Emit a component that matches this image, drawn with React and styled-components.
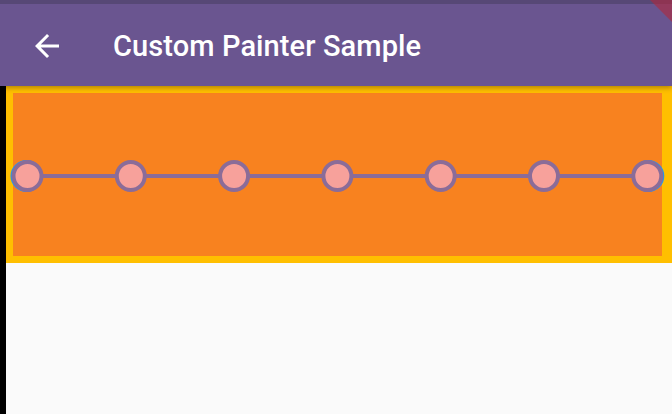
import React from 'react'
import styled, { createGlobalStyle } from 'styled-components'

const GlobalStyle = createGlobalStyle`
	html, body {
		margin: 0;
		padding: 0;
		background: #000;
		font-family: Roboto, "Noto Sans", sans-serif;
	}
`

const Screen = styled.div`
	width: 672px;
	height: 414px;
	display: flex;
	flex-direction: column;
	overflow: hidden;
	position: relative;
`

const AppBar = styled.header`
	position: relative;
	z-index: 2;
	height: 86px;
	background: #6a5590;
	display: flex;
	flex-direction: column;
	box-shadow: 0 2px 5px rgba(0, 0, 0, 0.3);
`

const StatusStrip = styled.div`
	height: 4px;
	background: #574876;
`

const Toolbar = styled.div`
	flex: 1;
	display: flex;
	align-items: center;
	padding: 2px 0 0 29px;
	gap: 48px;
`

const BackButton = styled.button`
	background: none;
	border: none;
	padding: 0;
	width: 36px;
	height: 36px;
	display: flex;
	align-items: center;
	justify-content: center;
	color: #fff;
	cursor: pointer;
`

const Title = styled.h1`
	margin: 0;
	color: #fff;
	font-size: 29px;
	font-weight: 500;
	letter-spacing: 0.1px;
`

const Body = styled.main`
	flex: 1;
	display: flex;
`

const Gutter = styled.div`
	width: 6px;
	background: #000;
`

const Content = styled.section`
	flex: 1;
	background: #fafafa;
`

const PainterBox = styled.div`
	height: 163px;
	background: #f8821f;
	border: solid #ffbf00;
	border-width: 7px 10px 7px 7px;
`

const Canvas = styled.svg`
	display: block;
	width: 100%;
	height: 100%;
	overflow: visible;
`

const Banner = styled.div`
	position: absolute;
	top: 0;
	right: 0;
	width: 0;
	height: 0;
	border-top: 22px solid rgba(176, 40, 60, 0.6);
	border-left: 22px solid transparent;
	z-index: 3;
`

const points = Array.from({ length: 7 }, (_, i) => 14.5 + i * 103.3)

const DotChain = () => (
	<Canvas>
		<circle cx={points[0] - 1} cy={83} r={16} fill="#2196f3" />
		<circle cx={points[6] + 1} cy={83} r={16} fill="#2196f3" />
		<line x1={points[0]} y1={83} x2={points[6]} y2={83} stroke="#8b6c98" strokeWidth={4} />
		{points.map((x) => (
			<circle key={x} cx={x} cy={83} r={14} fill="#f7a19b" stroke="#8b6c98" strokeWidth={4} />
		))}
	</Canvas>
)

const App = () => {
	return (
		<>
		<GlobalStyle/>
		<Screen>
			<AppBar>
				<StatusStrip/>
				<Toolbar>
					<BackButton aria-label="Back">
						<svg width="36" height="36" viewBox="0 0 24 24">
							<path d="M20 11H7.83l5.59-5.59L12 4l-8 8 8 8 1.41-1.41L7.83 13H20v-2z" fill="#fff" />
						</svg>
					</BackButton>
					<Title>Custom Painter Sample</Title>
				</Toolbar>
			</AppBar>
			<Body>
				<Gutter/>
				<Content>
					<PainterBox>
						<DotChain/>
					</PainterBox>
				</Content>
			</Body>
			<Banner/>
		</Screen>
		</>
	)
}

export default App
